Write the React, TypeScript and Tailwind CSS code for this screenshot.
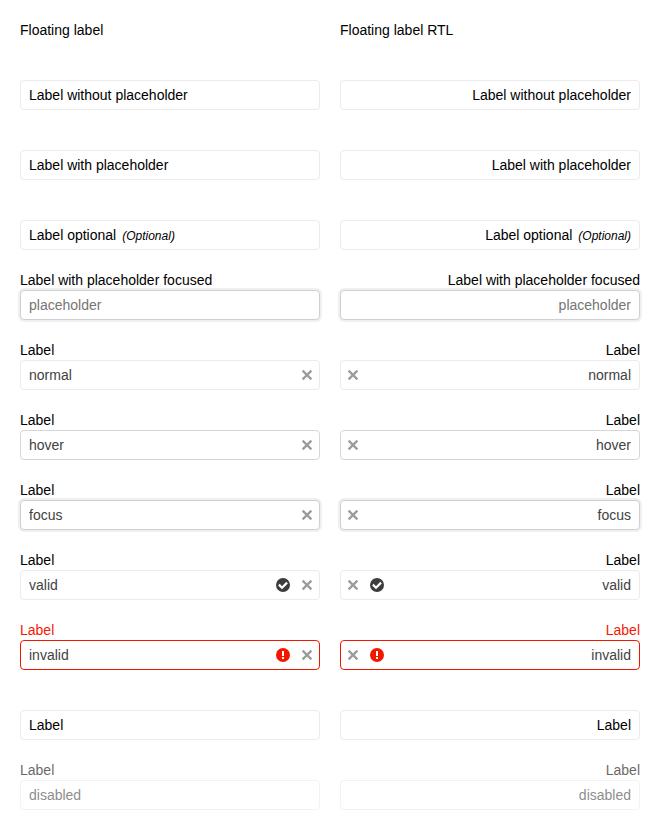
import { useId } from "react";
import clsx from "clsx";

type State = "normal" | "hover" | "focus" | "valid" | "invalid" | "disabled";

interface FieldSpec {
  label: string;
  optional?: boolean;
  value?: string;
  placeholder?: string;
  state?: State;
  resting?: boolean;
}

const fields: FieldSpec[] = [
  { label: "Label without placeholder", resting: true },
  { label: "Label with placeholder", resting: true },
  { label: "Label optional", optional: true, resting: true },
  { label: "Label with placeholder focused", placeholder: "placeholder", state: "focus" },
  { label: "Label", value: "normal" },
  { label: "Label", value: "hover", state: "hover" },
  { label: "Label", value: "focus", state: "focus" },
  { label: "Label", value: "valid", state: "valid" },
  { label: "Label", value: "invalid", state: "invalid" },
  { label: "Label", resting: true },
  { label: "Label", value: "disabled", state: "disabled" },
];

const borders: Record<State, string> = {
  normal: "border-[#ebebeb]",
  hover: "border-[#d6d6d6]",
  focus: "border-[#d0d0d0] shadow-[0_0_0_2px_rgba(0,0,0,0.06)]",
  valid: "border-[#ebebeb]",
  invalid: "border-[#f31700]",
  disabled: "border-[#ebebeb] opacity-60",
};

function ClearIcon() {
  return (
    <svg viewBox="0 0 16 16" className="size-4" fill="none" stroke="currentColor" strokeWidth="2.3" aria-hidden="true">
      <path d="m3.6 3.6 8.8 8.8M12.4 3.6l-8.8 8.8" />
    </svg>
  );
}

function CheckIcon() {
  return (
    <svg viewBox="0 0 16 16" className="size-4" aria-hidden="true">
      <circle cx="8" cy="8" r="7" fill="#3d3d3d" />
      <path d="m3.9 7.6 3.1 3.1 5.1-5.1" fill="none" stroke="#fff" strokeWidth="2.2" />
    </svg>
  );
}

function WarningIcon() {
  return (
    <svg viewBox="0 0 16 16" className="size-4" aria-hidden="true">
      <circle cx="8" cy="8" r="7" fill="#f31700" />
      <path d="M7 4h2v5H7zM7 10h2v2H7z" fill="#fff" />
    </svg>
  );
}

function Field({ label, optional, value, placeholder, state = "normal", resting }: FieldSpec) {
  const id = useId();
  return (
    <div className="relative flex flex-col">
      <label
        htmlFor={id}
        className={clsx(
          "h-5",
          resting && "pointer-events-none absolute start-[9px] top-[25px]",
          state === "invalid" && "text-[#f31700]",
          state === "disabled" && "opacity-60",
        )}
      >
        <span dir="ltr" className="inline-flex items-baseline gap-1.5">
          <span>{label}</span>
          {optional && <span className="text-xs italic">(Optional)</span>}
        </span>
      </label>
      <div
        className={clsx(
          "flex h-[30px] items-stretch rounded-[4px] border bg-white text-[#424242]",
          resting && "mt-5",
          borders[state],
        )}
      >
        <input
          id={id}
          type="text"
          defaultValue={value}
          placeholder={placeholder}
          disabled={state === "disabled"}
          aria-invalid={state === "invalid"}
          className="min-w-0 flex-1 bg-transparent px-2 outline-none placeholder:text-[#757575]"
        />
        {state === "valid" && (
          <span className="flex w-6 items-center justify-center">
            <CheckIcon />
          </span>
        )}
        {state === "invalid" && (
          <span className="flex w-6 items-center justify-center">
            <WarningIcon />
          </span>
        )}
        {value && state !== "disabled" && (
          <button
            type="button"
            aria-label="Clear"
            className="flex w-6 items-center justify-center text-[#9c9c9c]"
          >
            <ClearIcon />
          </button>
        )}
      </div>
    </div>
  );
}

function Column({ title, rtl }: { title: string; rtl?: boolean }) {
  return (
    <section className="flex min-w-0 flex-col gap-5">
      <h2>{title}</h2>
      <div dir={rtl ? "rtl" : "ltr"} className="flex flex-col gap-5">
        {fields.map((field, i) => (
          <Field key={i} {...field} />
        ))}
      </div>
    </section>
  );
}

export default function App() {
  return (
    <main className="grid grid-cols-2 gap-5 bg-white p-5 font-['Liberation_Sans',Arial,sans-serif] text-sm/5 text-black">
      <Column title="Floating label" />
      <Column title="Floating label RTL" rtl />
    </main>
  );
}
